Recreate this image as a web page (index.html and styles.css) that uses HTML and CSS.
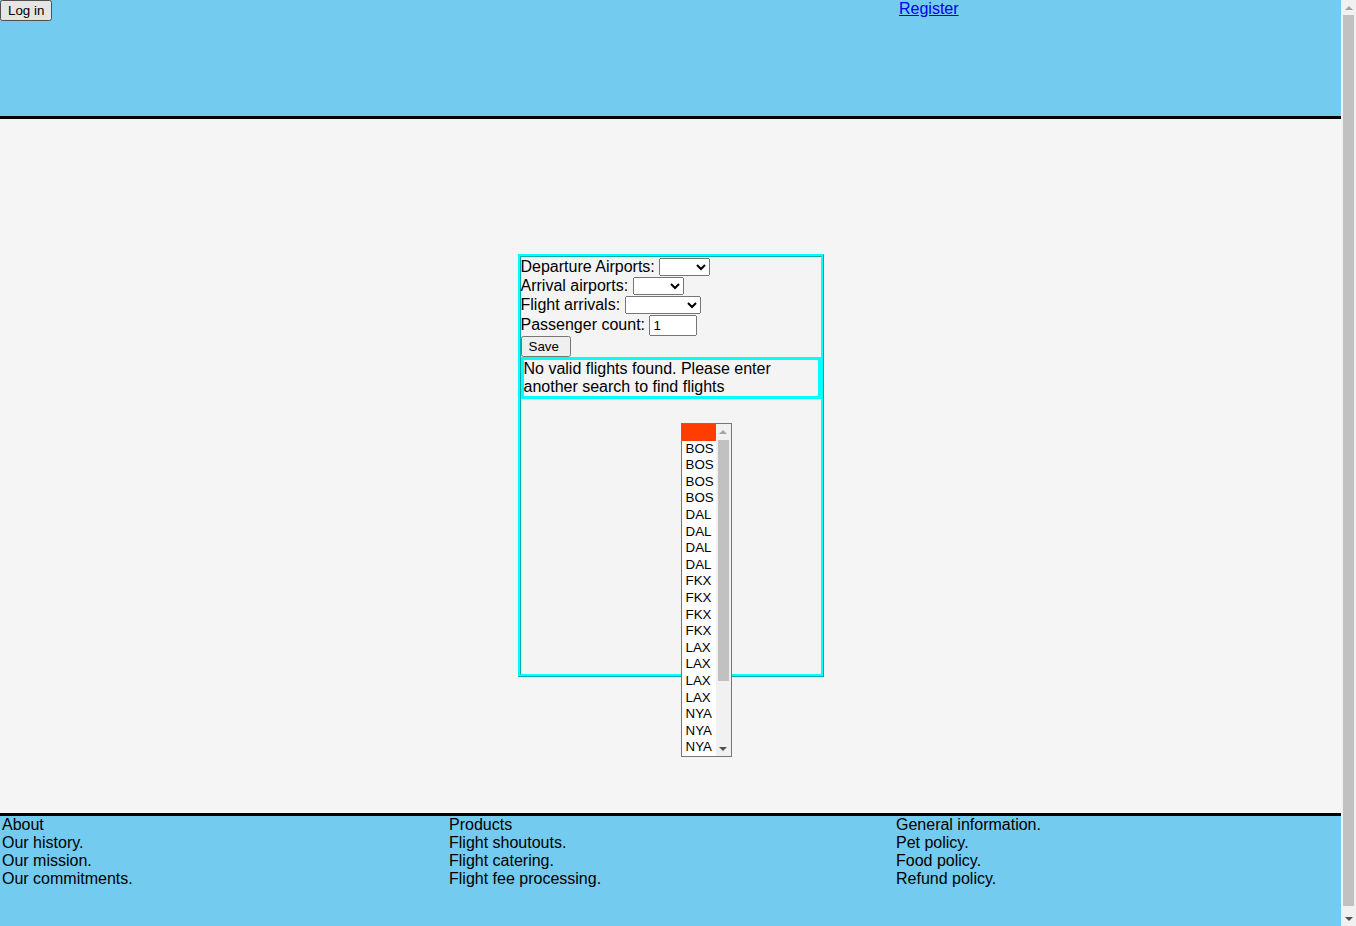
FILE: index.html
```html
<!DOCTYPE html>
<html lang="en">
<head>
<meta charset="utf-8">
<title>Flights</title>
<link rel="stylesheet" href="styles.css">
</head>
<body>
<div class="page">
  <header class="top">
    <div class="top-col"><button class="btn" type="button">Log in</button></div>
    <div class="top-col"></div>
    <div class="top-col top-right"><a href="#" class="reg">Register</a></div>
  </header>
  <main class="main">
    <div class="panel">
      <form class="search">
        <div class="row">Departure Airports: <select class="sel sel-dep"></select></div>
        <div class="row">Arrival airports: <select class="sel sel-arr"></select></div>
        <div class="row">Flight arrivals: <select class="sel sel-flt"></select></div>
        <div class="row row-input">Passenger count: <input class="count" type="text" value="1"></div>
        <button class="btn save" type="button">Save</button>
      </form>
      <div class="notice">No valid flights found. Please enter another search to find flights</div>
      <div class="list-wrap">
        <div class="listbox" role="listbox" aria-multiselectable="true">
          <div class="lb-items">
            <div class="lb-item lb-selected" role="option" aria-selected="true"></div>
            <div class="lb-item" role="option">BOS</div>
            <div class="lb-item" role="option">BOS</div>
            <div class="lb-item" role="option">BOS</div>
            <div class="lb-item" role="option">BOS</div>
            <div class="lb-item" role="option">DAL</div>
            <div class="lb-item" role="option">DAL</div>
            <div class="lb-item" role="option">DAL</div>
            <div class="lb-item" role="option">DAL</div>
            <div class="lb-item" role="option">FKX</div>
            <div class="lb-item" role="option">FKX</div>
            <div class="lb-item" role="option">FKX</div>
            <div class="lb-item" role="option">FKX</div>
            <div class="lb-item" role="option">LAX</div>
            <div class="lb-item" role="option">LAX</div>
            <div class="lb-item" role="option">LAX</div>
            <div class="lb-item" role="option">LAX</div>
            <div class="lb-item" role="option">NYA</div>
            <div class="lb-item" role="option">NYA</div>
            <div class="lb-item" role="option">NYA</div>
          </div>
          <div class="sbar sbar-list">
            <div class="sbar-btn"><span class="arrow-up"></span></div>
            <div class="sbar-track">
              <div class="sbar-thumb list-thumb"></div>
            </div>
            <div class="sbar-btn"><span class="arrow-down"></span></div>
          </div>
        </div>
      </div>
    </div>
  </main>
  <footer class="foot">
    <div class="foot-col">
      <div>About</div>
      <div>Our history.</div>
      <div>Our mission.</div>
      <div>Our commitments.</div>
    </div>
    <div class="foot-col">
      <div>Products</div>
      <div>Flight shoutouts.</div>
      <div>Flight catering.</div>
      <div>Flight fee processing.</div>
    </div>
    <div class="foot-col">
      <div>General information.</div>
      <div>Pet policy.</div>
      <div>Food policy.</div>
      <div>Refund policy.</div>
    </div>
  </footer>
</div>
<div class="sbar sbar-page" aria-hidden="true">
  <div class="sbar-btn"><span class="arrow-up"></span></div>
  <div class="sbar-track">
    <div class="sbar-thumb page-thumb"></div>
  </div>
  <div class="sbar-btn"><span class="arrow-down"></span></div>
</div>
</body>
</html>
```
FILE: styles.css
```css
html, body {
  margin: 0;
  padding: 0;
}
body {
  font-family: "Liberation Sans", Arial, sans-serif;
  font-size: 16px;
  color: #000;
  background: #f5f5f5;
  display: grid;
  grid-template-columns: 1fr 15px;
  align-items: start;
}
.page {
  min-width: 0;
}

/* fake classic scrollbars */
.sbar {
  display: flex;
  flex-direction: column;
  width: 15px;
  background: #f1f1f1;
}
.sbar-page {
  height: 926px;
}
.sbar-btn {
  height: 15px;
  flex: 0 0 15px;
  display: flex;
  align-items: center;
  justify-content: center;
}
.arrow-up {
  width: 0;
  height: 0;
  border-left: 4px solid transparent;
  border-right: 4px solid transparent;
  border-bottom: 4px solid #a3a3a3;
}
.arrow-down {
  width: 0;
  height: 0;
  border-left: 4px solid transparent;
  border-right: 4px solid transparent;
  border-top: 4px solid #505050;
}
.sbar-track {
  flex: 1;
  padding: 0 2px;
}
.sbar-thumb {
  background: #c1c1c1;
}
.page-thumb {
  height: 891px;
}
.list-thumb {
  height: 241px;
  margin-top: 1px;
}

.top {
  display: grid;
  grid-template-columns: 1fr 1fr 1fr;
  height: 116px;
  background: #73cbef;
  border-bottom: 3px solid #000;
  align-items: start;
}
.top-right {
  padding-left: 5px;
}
.reg {
  color: #0000ee;
  text-decoration: underline;
}
.btn {
  font-family: "Liberation Sans", Arial, sans-serif;
  font-size: 13.333px;
  margin: 0;
}
.main {
  box-sizing: border-box;
  height: 694px;
  padding-bottom: 1px;
  display: flex;
  align-items: center;
  justify-content: center;
  background: #f5f5f5;
}
.panel {
  box-sizing: border-box;
  width: 306px;
  height: 423px;
  border: 3px ridge #00ffff;
  background: #f4f4f4;
}
.search {
  margin: 0;
}
.row {
  height: 19px;
  line-height: 19px;
  white-space: nowrap;
}
.sel {
  font-family: "Liberation Sans", Arial, sans-serif;
  font-size: 13.333px;
  height: 18px;
  vertical-align: bottom;
  box-sizing: border-box;
  margin: 0;
  padding: 0;
}
.sel-dep { width: 51px; }
.sel-arr { width: 51px; }
.sel-flt { width: 76px; }
.row-input {
  height: 22px;
  line-height: 22px;
}
.count {
  font-family: "Liberation Sans", Arial, sans-serif;
  font-size: 13.333px;
  box-sizing: border-box;
  width: 48px;
  height: 21px;
  margin: 0;
  padding: 1px 2px;
  vertical-align: bottom;
}
.save {
  width: 50px;
  height: 21px;
  display: block;
  text-align: left;
  padding: 1px 4px 1px 6px;
}
.notice {
  border: 3px solid #00ffff;
  line-height: 18px;
}
.list-wrap {
  margin-top: 24px;
  padding-left: 160px;
}
.listbox {
  box-sizing: border-box;
  display: flex;
  width: 51px;
  height: 334px;
  border: 1px solid #767676;
  background: #fff;
  overflow: hidden;
}
.lb-items {
  flex: 1;
  min-width: 0;
  overflow: hidden;
}
.lb-item {
  height: 16.6px;
  line-height: 16.6px;
  padding-left: 4px;
  font-size: 13.333px;
  white-space: nowrap;
}
.lb-selected {
  background: #ff3d00;
}
.sbar-list {
  height: 332px;
}
.foot {
  display: grid;
  grid-template-columns: 1fr 1fr 1fr;
  height: 116px;
  background: #73cbef;
  border-top: 3px solid #000;
  align-items: start;
}
.foot-col {
  padding-left: 2px;
}
```
